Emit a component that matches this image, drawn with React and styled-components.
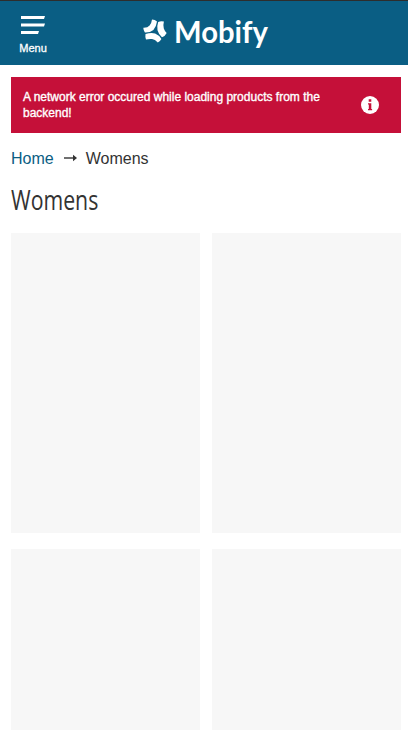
import React from "react";
import styled, { createGlobalStyle } from "styled-components";

const GlobalStyle = createGlobalStyle`
  * { box-sizing: border-box; }
  body {
    margin: 0;
    background: #fff;
    color: #333;
    font-family: "Liberation Sans", Arial, sans-serif;
  }
`;

const Page = styled.div`
  height: 730px;
  overflow: hidden;
`;

const Header = styled.header`
  display: grid;
  grid-template-columns: 66px 1fr 66px;
  height: 65px;
  border-top: 1px solid #2d2d2d;
  background: #0a5e84;
  color: #fff;
`;

const MenuButton = styled.button`
  display: flex;
  flex-direction: column;
  align-items: center;
  gap: 7px;
  padding: 15px 0 0;
  border: 0;
  background: none;
  color: inherit;
  font: 11px/14px "Liberation Sans", Arial, sans-serif;
  -webkit-text-stroke: 0.3px currentColor;

  svg { display: block; }
`;

const Logo = styled.div`
  display: flex;
  align-items: flex-start;
  padding: 18px 0 0 77px;

  svg { flex: none; }
`;

const Wordmark = styled.span`
  margin: -6px 0 0 7px;
  font: 700 30px/36px Lato, sans-serif;
  transform: scaleX(${(p) => p.$stretch});
  transform-origin: left;
`;

const Main = styled.main`
  padding: 12px 7px 0 11px;
`;

const Notification = styled.div`
  display: flex;
  align-items: center;
  justify-content: space-between;
  height: 56px;
  padding: 0 22px 0 12px;
  background: #c51039;
  color: #fff;
`;

const Message = styled.p`
  width: 310px;
  margin: 0;
  font-size: 12px;
  line-height: 16px;
  -webkit-text-stroke: 0.35px currentColor;
`;

const Breadcrumbs = styled.nav`
  display: flex;
  align-items: center;
  height: 20px;
  margin-top: 16px;
  font-size: 16px;
  line-height: 20px;

  svg { margin: -2px 9px 0 10px; }
`;

const HomeLink = styled.a`
  color: #0a5e84;
`;

const Title = styled.h1`
  width: max-content;
  margin: 14px 0 0;
  font: 400 28px/32px "Open Sans", sans-serif;
  transform: scaleX(${(p) => p.$squeeze});
  transform-origin: left;
`;

const Products = styled.div`
  display: grid;
  grid-template-columns: 1fr 1fr;
  grid-auto-rows: 300px;
  gap: 16px 12px;
  margin-top: 18px;
`;

const Placeholder = styled.div`
  background: #f7f7f7;
`;

export default function App() {
  return (
    <Page>
      <GlobalStyle />
      <Header>
        <MenuButton>
          <svg width="24" height="18" fill="#fff">
            <path d="M0 0h24l-1 3H0zM0 7.5h24l-1 3H0zM0 15h18l-1 3H0z" />
          </svg>
          Menu
        </MenuButton>
        <Logo>
          <svg width="24" height="24" fill="#fff">
            <path d="M.3 8.8Q4.6 9 6.6 6.6Q8.6 4.2 9 .6Q12 .6 14 2.4Q13.2 8 10.4 10.9Q7 13.7 1.9 13.5Q.4 11.5.3 8.8Z" />
            <path d="M15.2 3Q18 1.7 20.9 2.6Q19.8 7 20.8 9.6Q21.6 12.2 23.7 13.9Q22.2 17 19 18.2Q15.4 14.9 14.5 11.2Q13.8 7 15.2 3Z" />
            <path d="M2.5 15Q8 13.4 12.1 14.5Q16 16 18.4 20Q17.2 22.4 14.8 23.5Q12 20.3 9 20Q6 19.6 3 20.6Q2 17.6 2.5 15Z" />
          </svg>
          <Wordmark $stretch={0.975}>Mobify</Wordmark>
        </Logo>
      </Header>
      <Main>
        <Notification>
          <Message>
            A network error occured while loading products from the backend!
          </Message>
          <svg width="18" height="18">
            <circle cx="9" cy="9" r="9" fill="#fff" />
            <path fill="#c51039" d="M7.7 3.2h2.6v2.5H7.7zM7 7.2h3.3v5.8h.8v1.2H7v-1.2h.8v-4.5H7z" />
          </svg>
        </Notification>
        <Breadcrumbs>
          <HomeLink>Home</HomeLink>
          <svg width="13" height="8" viewBox="0 0 13 8">
            <path d="M0 4h10" stroke="#333" strokeWidth="1.4" />
            <path d="M9 .8l4 3.2-4 3.2z" fill="#333" />
          </svg>
          <span>Womens</span>
        </Breadcrumbs>
        <Title $squeeze={0.76}>Womens</Title>
        <Products>
          <Placeholder />
          <Placeholder />
          <Placeholder />
          <Placeholder />
        </Products>
      </Main>
    </Page>
  );
}
